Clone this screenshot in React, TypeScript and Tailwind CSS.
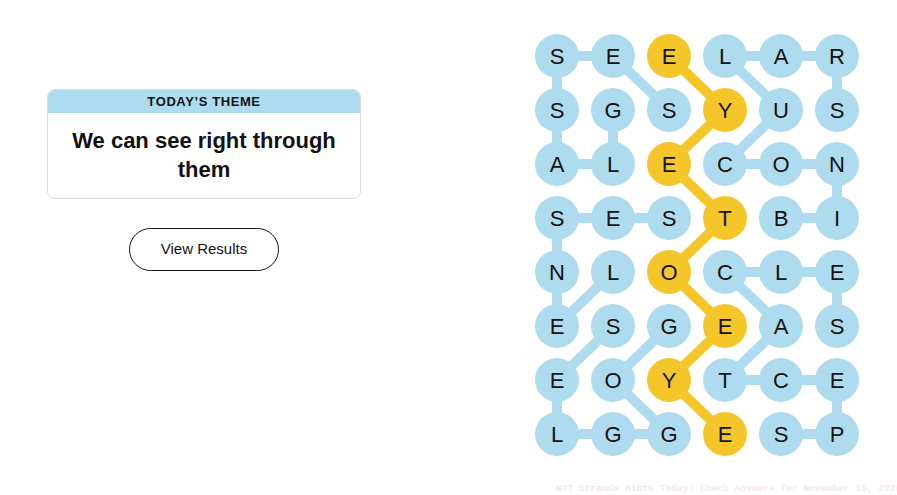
import React from 'react';

const BLUE = '#aedcee';
const YELLOW = '#f5c62a';

const board = ['SEELAR', 'SGSYUS', 'ALECON', 'SESTBI', 'NLOCLE', 'ESGEAS', 'EOYTCE', 'LGGESP'];

// spangram cells [row, col]
const spangram: [number, number][] = [
  [0, 2], [1, 3], [2, 2], [3, 3], [4, 2], [5, 3], [6, 2], [7, 3],
];

// found theme words, each as a path of cells
const words: [number, number][][] = [
  // GLASSES
  [[1, 1], [2, 1], [2, 0], [1, 0], [0, 0], [0, 1], [1, 2]],
  // BINOCULARS
  [[3, 4], [3, 5], [2, 5], [2, 4], [2, 3], [1, 4], [0, 3], [0, 4], [0, 5], [1, 5]],
  // LENSES
  [[4, 1], [5, 0], [4, 0], [3, 0], [3, 1], [3, 2]],
  // SPECTACLES
  [[7, 4], [7, 5], [6, 5], [6, 4], [6, 3], [5, 4], [4, 3], [4, 4], [4, 5], [5, 5]],
  // GOGGLES
  [[5, 2], [6, 1], [7, 2], [7, 1], [7, 0], [6, 0], [5, 1]],
];

const cx = (c: number) => 22 + c * 56;
const cy = (r: number) => 22 + r * 54;

const isSpangram = (r: number, c: number) => spangram.some(([a, b]) => a === r && b === c);

function PathLines({ cells, color }: { cells: [number, number][]; color: string }) {
  const points = cells.map(([r, c]) => `${cx(c)},${cy(r)}`).join(' ');
  return <polyline points={points} fill="none" stroke={color} strokeWidth={10} strokeLinejoin="round" strokeLinecap="round" />;
}

function Board() {
  return (
    <div className="relative w-[324px] h-[422px]">
      <svg className="absolute inset-0" width={324} height={422}>
        {words.map((w, i) => (
          <PathLines key={i} cells={w} color={BLUE} />
        ))}
        <PathLines cells={spangram} color={YELLOW} />
      </svg>
      <div className="relative grid grid-cols-[repeat(6,44px)] grid-rows-[repeat(8,44px)] gap-x-[12px] gap-y-[10px]">
        {board.map((row, r) =>
          row.split('').map((ch, c) => (
            <div
              key={`${r}-${c}`}
              className={`w-[44px] h-[44px] rounded-full flex items-center justify-center text-[22px] text-[#121212] ${
                isSpangram(r, c) ? 'bg-[#f5c62a]' : 'bg-[#aedcee]'
              }`}
            >
              {ch}
            </div>
          ))
        )}
      </div>
    </div>
  );
}

export default function App() {
  return (
    <div className="relative w-[897px] h-[495px] bg-white overflow-hidden font-['Liberation_Sans',Arial,sans-serif] text-[#121212]">
      <div className="flex items-start">
        <div className="ml-[47px] mt-[89px] w-[314px] flex flex-col items-center">
          <div className="w-full rounded-[8px] border border-[#dcdcdc] overflow-hidden">
            <div className="h-[23px] bg-[#aedcee] flex items-center justify-center text-[13px] font-semibold tracking-[0.6px] uppercase">
              Today’s Theme
            </div>
            <div className="pt-[13px] pb-[14px] px-4 text-center text-[22px] leading-[29px] font-bold">
              We can see right through them
            </div>
          </div>
          <button className="mt-[29px] w-[150px] h-[43px] rounded-full border border-[#121212] bg-white text-[15px] text-[#121212]">
            View Results
          </button>
        </div>
        <div className="ml-[174px] mt-[34px]">
          <Board />
        </div>
      </div>
      <div className="absolute left-[556px] top-[482px] whitespace-nowrap font-['Liberation_Mono',monospace] text-[9.6px] font-bold text-[#f3e8e8]">
        NYT Strands Hints Today: Check Answers for November 15, 2025
      </div>
    </div>
  );
}
